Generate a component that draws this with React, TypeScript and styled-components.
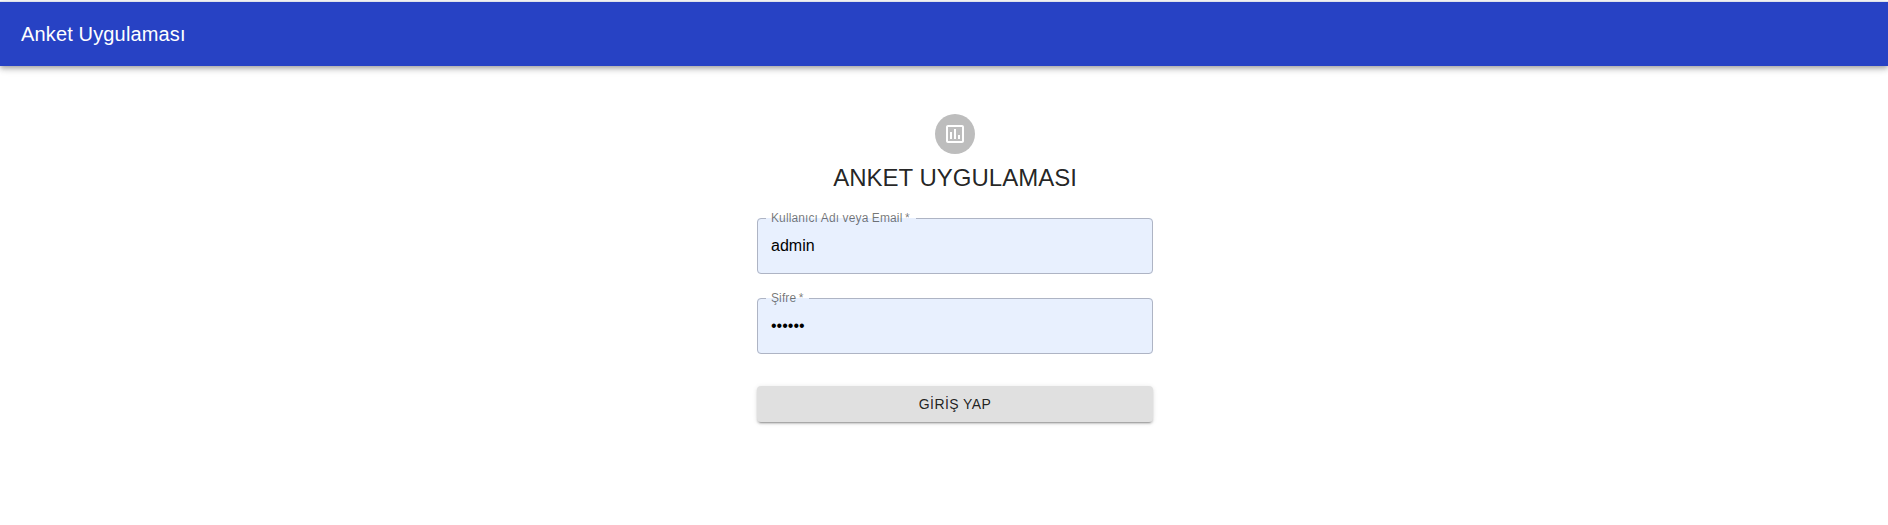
import React, { useState } from "react";
import styled, { createGlobalStyle } from "styled-components";

const GlobalStyle = createGlobalStyle`
  *, *::before, *::after { box-sizing: border-box; }
  body {
    margin: 0;
    background: #fff;
    color: rgba(0, 0, 0, 0.87);
    font-family: "Liberation Sans", Arial, sans-serif;
  }
`;

const Page = styled.div`
  padding-top: 1px;
`;

const AppBar = styled.header`
  display: flex;
  align-items: center;
  height: 65px;
  padding: 0 21px;
  border-top: 1px solid #dfe2ea;
  background: #2742c4;
  color: #fff;
  box-shadow: 0 2px 4px -1px rgba(0, 0, 0, 0.2), 0 4px 5px 0 rgba(0, 0, 0, 0.14),
    0 1px 10px 0 rgba(0, 0, 0, 0.12);
`;

const BarTitle = styled.div`
  font-size: 20px;
  line-height: 32px;
  letter-spacing: 0.0075em;
`;

const Main = styled.main`
  display: flex;
  justify-content: center;
  padding: 48px 0 24px 22px;
`;

const LoginPanel = styled.div`
  display: flex;
  flex-direction: column;
  align-items: center;
  gap: 8px;
  width: 100%;
  max-width: 396px;
`;

const Avatar = styled.div`
  display: flex;
  align-items: center;
  justify-content: center;
  width: 40px;
  height: 40px;
  border-radius: 50%;
  background: #bdbdbd;
  color: #fff;
`;

const Title = styled.h1`
  margin: 0;
  font-size: 24px;
  font-weight: 400;
  line-height: 32px;
`;

const Form = styled.form`
  display: flex;
  flex-direction: column;
  gap: 24px;
  width: 100%;
  padding-top: 16px;
`;

const FieldBox = styled.div`
  position: relative;
  height: 56px;
`;

const FieldInput = styled.input`
  display: block;
  width: 100%;
  height: 100%;
  padding: 0 14px;
  border: 0;
  border-radius: 4px;
  outline: 0;
  background: #e8f0fe;
  color: #000;
  font: 16px "Liberation Sans", Arial, sans-serif;
`;

const FieldLabel = styled.label`
  position: absolute;
  z-index: 1;
  top: -8px;
  left: 14px;
  color: rgba(0, 0, 0, 0.54);
  font-size: 12px;
  line-height: 16px;
  letter-spacing: 0.00938em;
  white-space: nowrap;
`;

const Outline = styled.fieldset`
  position: absolute;
  inset: -6px 0 0;
  margin: 0;
  padding: 0 8px;
  border: 1px solid #aeb4c4;
  border-radius: 4px;
  pointer-events: none;
`;

const Notch = styled.legend`
  height: 12px;
  padding: 0 5px;
  font-size: 12px;
  line-height: 12px;
  letter-spacing: 0.00938em;
  visibility: hidden;
`;

const SubmitButton = styled.button`
  height: 36px;
  margin-top: 8px;
  border: 0;
  border-radius: 4px;
  background: #e0e0e0;
  color: rgba(0, 0, 0, 0.87);
  font: 14px "Liberation Sans", Arial, sans-serif;
  letter-spacing: 0.02857em;
  cursor: pointer;
  box-shadow: 0 3px 1px -2px rgba(0, 0, 0, 0.2), 0 2px 2px 0 rgba(0, 0, 0, 0.14),
    0 1px 5px 0 rgba(0, 0, 0, 0.12);
`;

type FieldProps = { id: string; label: string; type: string; initial: string };

function Field({ id, label, type, initial }: FieldProps) {
  const [value, setValue] = useState(initial);
  return (
    <FieldBox>
      <FieldLabel htmlFor={id}>{label}&thinsp;*</FieldLabel>
      <FieldInput
        id={id}
        type={type}
        value={value}
        required
        onChange={(e) => setValue(e.target.value)}
      />
      <Outline aria-hidden="true">
        <Notch>{label}&nbsp;*</Notch>
      </Outline>
    </FieldBox>
  );
}

function SurveyIcon() {
  return (
    <svg width="24" height="24" viewBox="0 0 24 24" fill="currentColor" aria-hidden="true">
      <path d="M9 17H7v-7h2v7zm4 0h-2V7h2v10zm4 0h-2v-4h2v4zm2 2H5V5h14v14zm0-16H5c-1.1 0-2 .9-2 2v14c0 1.1.9 2 2 2h14c1.1 0 2-.9 2-2V5c0-1.1-.9-2-2-2z" />
    </svg>
  );
}

export default function App() {
  return (
    <Page>
      <GlobalStyle />
      <AppBar>
        <BarTitle>Anket Uygulaması</BarTitle>
      </AppBar>
      <Main>
        <LoginPanel>
          <Avatar>
            <SurveyIcon />
          </Avatar>
          <Title>ANKET UYGULAMASI</Title>
          <Form onSubmit={(e) => e.preventDefault()}>
            <Field id="user" label="Kullanıcı Adı veya Email" type="text" initial="admin" />
            <Field id="password" label="Şifre" type="password" initial="123456" />
            <SubmitButton type="submit">GİRİŞ YAP</SubmitButton>
          </Form>
        </LoginPanel>
      </Main>
    </Page>
  );
}
